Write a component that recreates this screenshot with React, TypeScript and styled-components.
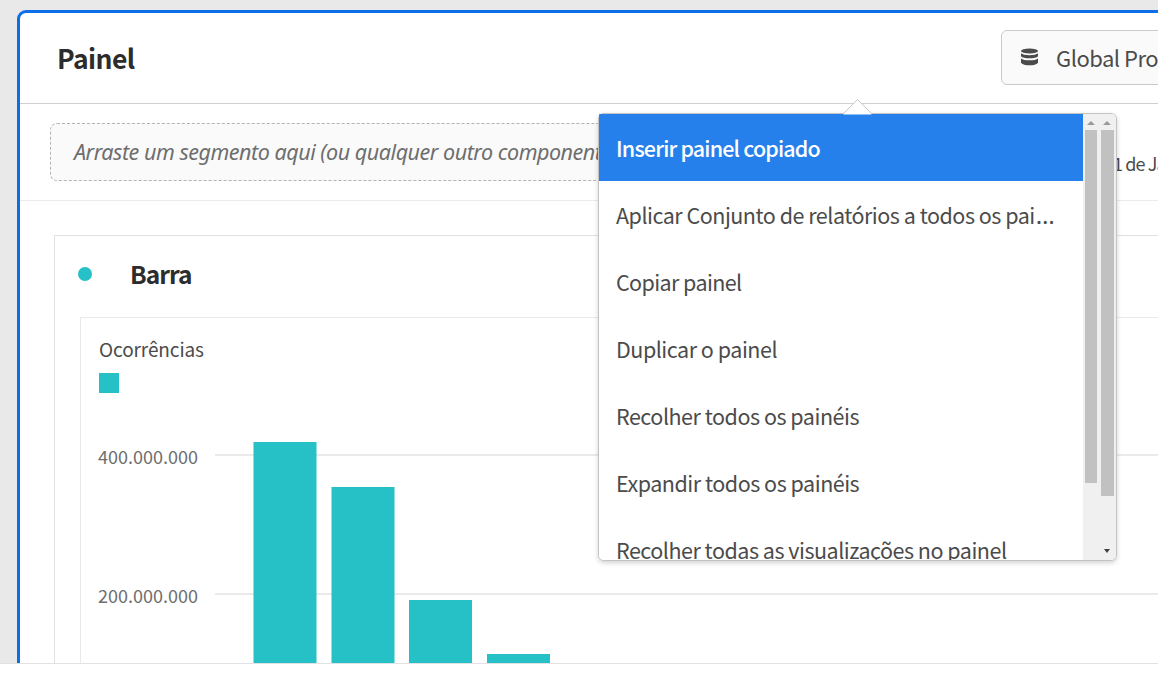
import React from "react";
import styled, { createGlobalStyle } from "styled-components";

const TEAL = "#26c0c7";

const GlobalStyle = createGlobalStyle`
  *, *::before, *::after { box-sizing: border-box; }
  body {
    margin: 0;
    background: #fff;
    overflow: hidden;
    font-family: "Noto Sans CJK SC", "Noto Sans", sans-serif;
    color: #4b4b4b;
  }
`;

const Page = styled.div`
  position: relative;
  width: 1158px;
  height: 684px;
  overflow: hidden;
  background: #fff;
`;

const Workspace = styled.main`
  height: 664px;
  padding: 10px 0 0 17px;
  background: #e9e9e9;
  border-bottom: 1px solid #e2e2e5;
  overflow: hidden;
`;

const Panel = styled.section`
  width: 1300px;
  height: 700px;
  background: #fff;
  border: 3px solid #0d6fe8;
  border-radius: 9px;
  overflow: hidden;
`;

const PanelHeader = styled.header`
  display: flex;
  align-items: flex-start;
  justify-content: space-between;
  height: 91px;
  padding: 17px 0 0 37px;
  border-bottom: 1px solid #d0d0d0;
`;

const Label = styled.span<{ $size: number; $line: number; $track?: number; $weight?: number }>`
  display: block;
  font-size: ${(p) => p.$size}px;
  line-height: ${(p) => p.$line}px;
  letter-spacing: ${(p) => p.$track ?? 0}px;
  font-weight: ${(p) => p.$weight ?? 400};
  white-space: nowrap;
`;

const Heading = styled(Label).attrs({ as: "h2" })`
  margin: 0;
  color: #2c2c2c;
`;

const Ellipsis = styled.span`
  margin-left: 1px;
  font-family: "Noto Sans", sans-serif;
  font-size: 24px;
  line-height: 1;
  letter-spacing: 0;
`;

const SuiteButton = styled.button`
  display: flex;
  align-items: center;
  gap: 17px;
  width: 313px;
  height: 55px;
  padding: 0 0 1px 18px;
  border: 1px solid #cacaca;
  border-radius: 6px;
  background: #fafafa;
  color: #4b4b4b;
  font-family: inherit;
`;

const DropRow = styled.div`
  display: flex;
  justify-content: space-between;
  align-items: flex-start;
  height: 97px;
  padding: 19px 0 0 30px;
  border-bottom: 1px solid #ebebeb;
`;

const DropZone = styled.div`
  width: 850px;
  height: 58px;
  padding: 11px 0 0 23px;
  border: 1px dashed #b3b3b3;
  border-radius: 7px;
  background: #fafafa;
  color: #6e6e6e;
  font-family: "Noto Sans", sans-serif;
  font-style: italic;
`;

const DateRange = styled.div`
  width: 201px;
  padding-top: 24px;
`;

const Card = styled.article`
  margin: 34px 0 0 34px;
  height: 600px;
  padding: 20px 0 0 26px;
  border: 1px solid #e1e1e1;
`;

const CardHeader = styled.div`
  display: flex;
  align-items: center;
  gap: 38px;
  height: 36px;
  margin-left: -3px;
`;

const Dot = styled.i`
  width: 14px;
  height: 14px;
  border-radius: 50%;
  background: ${TEAL};
`;

const ChartBox = styled.div`
  margin: 25px 0 0 -1px;
  height: 500px;
  border: 1px solid #eaeaea;
  padding: 16px 0 0 18px;
`;

const Swatch = styled.div`
  width: 20px;
  height: 20px;
  margin-top: 9px;
  background: ${TEAL};
`;

const ChartRow = styled.div`
  display: flex;
  margin-top: 34px;
`;

const Axis = styled.div`
  display: flex;
  flex-direction: column;
  gap: 109px;
  width: 117px;
  padding-top: 14px;
  margin-left: -1px;
  color: #6e6e6e;
`;

const Menu = styled.div`
  position: absolute;
  left: 598px;
  top: 113px;
  display: flex;
  width: 518.5px;
  height: 448px;
  border: 1px solid #c4c4c4;
  border-radius: 6px;
  background: #fff;
  box-shadow: 0 2px 5px rgba(0, 0, 0, 0.18);
`;

const MenuTip = styled.svg`
  position: absolute;
  left: 244px;
  top: -16px;
`;

const MenuList = styled.ul`
  flex: 1;
  margin: 0;
  padding: 0;
  overflow: hidden;
  border-radius: 1px 0 0 5px;
  list-style: none;
`;

const MenuItem = styled.li<{ $active?: boolean }>`
  height: 67px;
  padding: 17px 0 0 17px;
  background: ${(p) => (p.$active ? "#2680eb" : "#fff")};
  color: ${(p) => (p.$active ? "#fff" : "#4b4b4b")};
`;

const Rails = styled.div`
  display: flex;
  gap: 4px;
  width: 33px;
  padding: 0 2px;
  background: #f0f0f0;
  border-radius: 0 5px 5px 0;
`;

const Rail = styled.div`
  display: flex;
  flex-direction: column;
  align-items: center;
  width: 12.5px;
  padding-top: 7px;
`;

const Arrow = styled.i<{ $down?: boolean }>`
  border: 4px solid transparent;
  border-top: ${(p) => (p.$down ? "4px solid #404040" : "0")};
  border-bottom: ${(p) => (p.$down ? "0" : "4px solid #999")};
  ${(p) => p.$down && "border-left-width: 3px; border-right-width: 3px; margin-bottom: 7px;"}
`;

const Thumb = styled.div<{ $length: number }>`
  width: 12.5px;
  height: ${(p) => p.$length}px;
  margin: 5px 0 auto;
  background: #c1c1c1;
`;

const bars = [
  { x: 38.5, top: 18 },
  { x: 116.5, top: 63 },
  { x: 194, top: 176 },
  { x: 272, top: 230 },
];

const axisLabels = ["400.000.000", "200.000.000"];

const menuItems = [
  { text: "Inserir painel copiado", track: -0.84, active: true },
  { text: "Aplicar Conjunto de relatórios a todos os pai", track: -0.49, more: true },
  { text: "Copiar painel", track: -0.6 },
  { text: "Duplicar o painel", track: -0.48 },
  { text: "Recolher todos os painéis", track: -0.48 },
  { text: "Expandir todos os painéis", track: -0.48 },
  { text: "Recolher todas as visualizações no painel", track: -0.49 },
];

const DatabaseIcon = () => (
  <svg width="19" height="18" viewBox="0 0 19 18" fill="#4b4b4b">
    <ellipse cx="9.5" cy="3" rx="8.5" ry="2.6" />
    <path d="M1 5.3C3.5 7.8 15.5 7.8 18 5.3V8.2C16 11 3 11 1 8.2Z" />
    <path d="M1 10.4C3.5 12.9 15.5 12.9 18 10.4V14.8C16 18.2 3 18.2 1 14.8Z" />
  </svg>
);

export default function App() {
  return (
    <Page>
      <GlobalStyle />
      <Workspace>
        <Panel>
          <PanelHeader>
            <Heading $size={26.5} $line={56} $weight={600} $track={-0.6}>Painel</Heading>
            <SuiteButton>
              <DatabaseIcon />
              <Label $size={22} $line={32} $track={-0.5}>Global Production</Label>
            </SuiteButton>
          </PanelHeader>
          <DropRow>
            <DropZone>
              <Label $size={21.5} $line={34} $track={-0.47}>
                Arraste um segmento aqui (ou qualquer outro componente)
              </Label>
            </DropZone>
            <DateRange>
              <Label $size={18} $line={32} $track={-0.9}>1 de Jan de 2022</Label>
            </DateRange>
          </DropRow>
          <Card>
            <CardHeader>
              <Dot />
              <Heading $size={24.5} $line={36} $weight={600} $track={-0.95}>Barra</Heading>
            </CardHeader>
            <ChartBox>
              <Label $size={19} $line={30} $track={-0.1}>Ocorrências</Label>
              <Swatch />
              <ChartRow>
                <Axis>
                  {axisLabels.map((text) => (
                    <Label key={text} $size={18} $line={30}>{text}</Label>
                  ))}
                </Axis>
                <svg width="1000" height="300" viewBox="0 0 1000 300">
                  <path d="M0 28H1000M0 167H1000" stroke="#e4e4e4" strokeWidth="1.5" />
                  {bars.map((b) => (
                    <rect key={b.x} x={b.x} y={b.top - 3} width="63" height={300} fill={TEAL} />
                  ))}
                </svg>
              </ChartRow>
            </ChartBox>
          </Card>
        </Panel>
      </Workspace>
      <Menu>
        <MenuList>
          {menuItems.map((m) => (
            <MenuItem key={m.text} $active={m.active}>
              <Label $size={21.5} $line={34} $track={m.track} $weight={m.active ? 500 : 400}>
                {m.text}
                {m.more && <Ellipsis>…</Ellipsis>}
              </Label>
            </MenuItem>
          ))}
        </MenuList>
        <Rails>
          <Rail>
            <Arrow />
            <Thumb $length={353} />
          </Rail>
          <Rail>
            <Arrow />
            <Thumb $length={366} />
            <Arrow $down />
          </Rail>
        </Rails>
        <MenuTip width="30" height="17" viewBox="0 0 30 17">
          <path d="M0.5 16L14.5 2L28.5 16V16.5H0.5Z" fill="#fff" />
          <path d="M0.5 15.5L14.5 1.5L28.5 15.5" fill="none" stroke="#c8c8c8" />
        </MenuTip>
      </Menu>
    </Page>
  );
}
